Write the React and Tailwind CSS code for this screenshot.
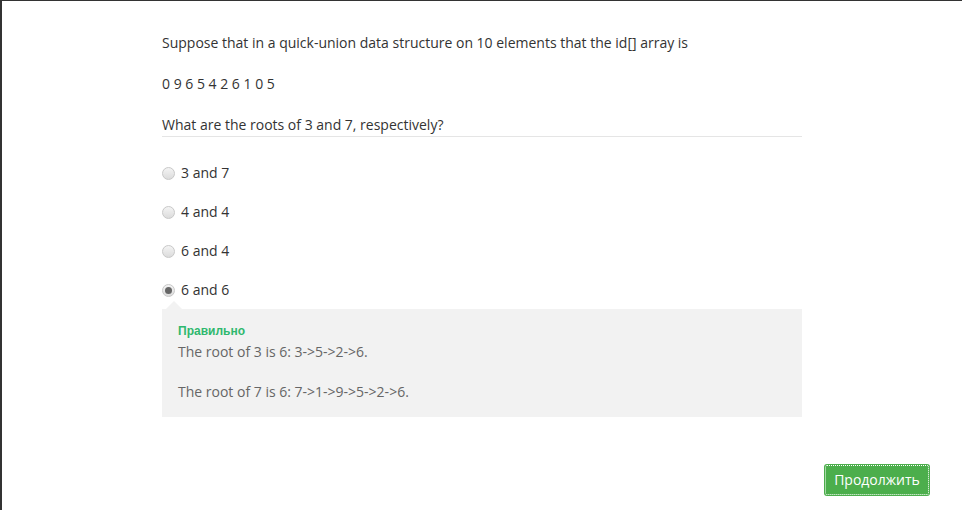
import React from 'react'

const options = ['3 and 7', '4 and 4', '6 and 4', '6 and 6'];

const Radio = ({ checked }) => (
  <span className="relative inline-block w-[13px] h-[13px] rounded-full border border-[#c8c8c8] bg-gradient-to-b from-[#f4f4f4] to-[#dcdcdc] shrink-0">
    {checked && (
      <span className="absolute left-[2px] top-[2px] w-[7px] h-[7px] rounded-full bg-[#666]" />
    )}
  </span>
);

const App = () => {
  const selected = 3;

  return (
    <div className="h-screen bg-white border-t border-l-2 border-[#333] text-[#333] text-[14px] leading-5 font-['Open_Sans',sans-serif] flex flex-col">
      <div className="ml-[160px] w-[640px] pt-[32px]">
        {/* Question */}
        <p>Suppose that in a quick-union data structure on 10 elements that the id[] array is</p>
        <p className="mt-[21px]">0 9 6 5 4 2 6 1 0 5</p>
        <p className="mt-[21px] border-b border-[#e5e5e5] pb-px">What are the roots of 3 and 7, respectively?</p>

        {/* Options */}
        <div className="mt-[26px] flex flex-col gap-[19px]">
          {options.map((opt, i) => (
            <label key={i} className="flex items-center gap-[6px]">
              <Radio checked={i === selected} />
              <span>{opt}</span>
            </label>
          ))}
        </div>

        {/* Feedback */}
        <div className="relative mt-[9px] bg-[#f2f2f2] pl-4 pt-[13px] pb-[15px] text-[#666]">
          <span className="absolute left-[4px] -top-[8px] w-0 h-0 border-l-[8px] border-r-[8px] border-b-[8px] border-l-transparent border-r-transparent border-b-[#f2f2f2]" />
          <div className="mb-[2px] text-[12px] leading-[18px] font-bold text-[#2fb86e] font-['Liberation_Sans',Arial,sans-serif]">Правильно</div>
          <p>The root of 3 is 6: 3-&gt;5-&gt;2-&gt;6.</p>
          <p className="mt-5">The root of 7 is 6: 7-&gt;1-&gt;9-&gt;5-&gt;2-&gt;6.</p>
        </div>
      </div>

      {/* Continue */}
      <div className="flex justify-end mr-[32px] mt-[47px]">
        <button className="w-[106px] h-[32px] rounded-[3px] bg-[#4cae4c] text-white text-[14px] outline-1 outline-dotted outline-white -outline-offset-2">
          Продолжить
        </button>
      </div>
    </div>
  );
};

export default App;
